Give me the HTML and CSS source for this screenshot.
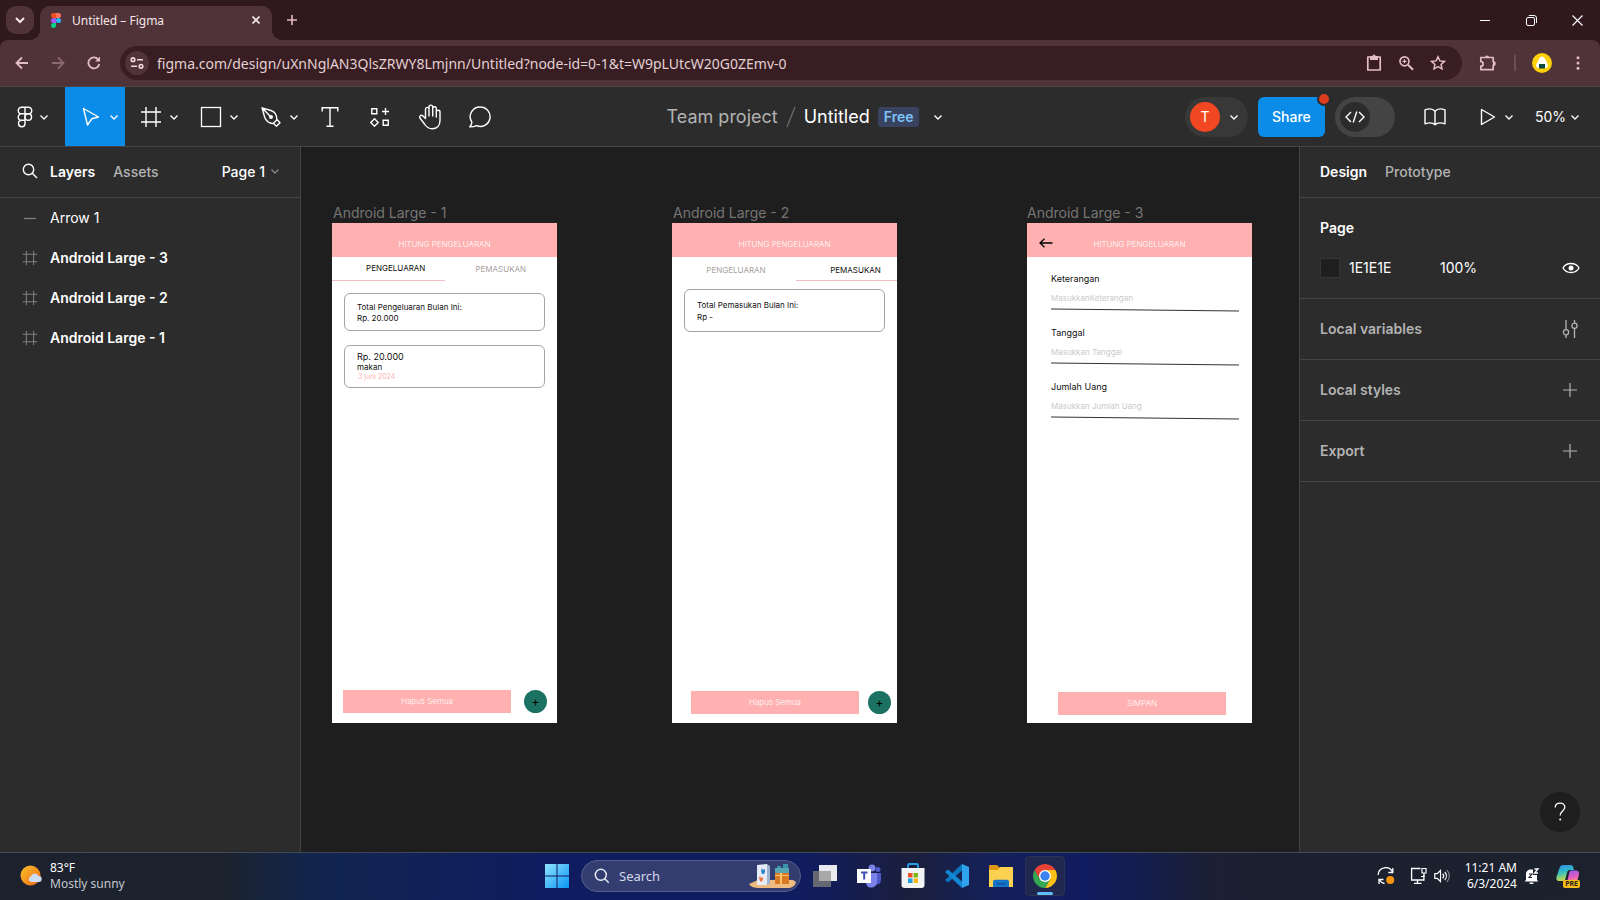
FILE: index.html
```html
<!DOCTYPE html>
<html lang="en">
<head>
<meta charset="utf-8">
<title>Untitled – Figma</title>
<link rel="stylesheet" href="styles.css">
</head>
<body>
<svg class="defs" aria-hidden="true">
  <symbol id="chev" viewBox="0 0 10 10"><path d="M1.500 3.500 5 7l3.500-3.500" fill="none" stroke="currentColor" stroke-width="1.300"/></symbol>
  <symbol id="frame" viewBox="0 0 22 22"><path d="M6 1v20M16 1v20M1 6h20M1 16h20" fill="none" stroke="currentColor" stroke-width="1.400"/></symbol>
  <symbol id="plus" viewBox="0 0 14 14"><path d="M7 0v14M0 7h14" fill="none" stroke="currentColor" stroke-width="1.200"/></symbol>
</svg>
<div class="screen">

<header class="tabstrip">
  <button class="tab-search" aria-label="Search tabs"><svg width="10" height="10" viewBox="0 0 10 10"><path d="M1 3l4 4 4-4" fill="none" stroke="currentColor" stroke-width="2"/></svg></button>
  <div class="tab">
    <svg width="10" height="15" viewBox="0 0 10 15"><path d="M2.500 0H5v5H2.500a2.500 2.500 0 010-5z" fill="#f24e1e"/><path d="M5 0h2.500a2.500 2.500 0 010 5H5z" fill="#ff7262"/><path d="M2.500 5H5v5H2.500a2.500 2.500 0 010-5z" fill="#a259ff"/><circle cx="7.500" cy="7.500" r="2.500" fill="#1abcfe"/><path d="M2.500 10H5v2.500A2.500 2.500 0 112.500 10z" fill="#0acf83"/></svg>
    <span class="tab-title">Untitled – Figma</span>
    <button class="tab-close" aria-label="Close tab"><svg width="8" height="8" viewBox="0 0 8 8"><path d="M.5.5l7 7M7.500.5l-7 7" stroke="currentColor" stroke-width="1.600"/></svg></button>
  </div>
  <button class="new-tab" aria-label="New tab"><svg width="10" height="10" viewBox="0 0 10 10"><path d="M5 0v10M0 5h10" stroke="currentColor" stroke-width="1.600"/></svg></button>
  <div class="window-controls">
    <button aria-label="Minimize"><svg width="10" height="10"><path d="M0 5.500h10" stroke="currentColor"/></svg></button>
    <button aria-label="Restore"><svg width="11" height="11" viewBox="0 0 11 11"><rect x=".5" y="2.500" width="8" height="8" rx="1.500" fill="none" stroke="currentColor"/><path d="M2.800.5H8A2.500 2.500 0 0110.500 3v5" fill="none" stroke="currentColor"/></svg></button>
    <button aria-label="Close"><svg width="11" height="11" viewBox="0 0 11 11"><path d="M.5.5l10 10M10.500.5l-10 10" stroke="currentColor" stroke-width="1.100"/></svg></button>
  </div>
</header>

<div class="browserbar">
  <button class="nav" aria-label="Back"><svg width="14" height="14" viewBox="0 0 14 14"><path d="M13 7H2M7 1.500L1.500 7 7 12.500" fill="none" stroke="currentColor" stroke-width="1.800"/></svg></button>
  <button class="nav dim" aria-label="Forward"><svg width="14" height="14" viewBox="0 0 14 14"><path d="M1 7h11M7 1.500L12.500 7 7 12.500" fill="none" stroke="currentColor" stroke-width="1.800"/></svg></button>
  <button class="nav" aria-label="Reload"><svg width="14" height="14" viewBox="0 0 14 14"><path d="M12.300 8A5.500 5.500 0 1111 3.200L12 4.300" fill="none" stroke="currentColor" stroke-width="1.800"/><path d="M13 .5v5H8z" fill="currentColor"/></svg></button>
  <div class="omnibox">
    <button class="site-info" aria-label="Site information"><svg width="14" height="12" viewBox="0 0 14 12"><g fill="none" stroke="currentColor" stroke-width="1.600"><circle cx="3" cy="2.700" r="1.800"/><path d="M7 2.700h6M1 9.300h6"/><circle cx="11" cy="9.300" r="1.800"/></g></svg></button>
    <input class="url" aria-label="Address" value="figma.com/design/uXnNglAN3QlsZRWY8Lmjnn/Untitled?node-id=0-1&amp;t=W9pLUtcW20G0ZEmv-0">
    <button aria-label="Clipboard"><svg width="16" height="18" viewBox="0 0 16 18"><path d="M1.800 3h12.400v13H1.800z" fill="none" stroke="currentColor" stroke-width="1.700" stroke-linejoin="round"/><path d="M4 2h2.500a1.500 1.500 0 013 0H12v4H4z" fill="currentColor"/></svg></button>
    <button aria-label="Zoom"><svg width="16" height="16" viewBox="0 0 16 16"><g fill="none" stroke="currentColor"><circle cx="6.500" cy="6.300" r="4.500" stroke-width="1.700"/><path d="M10 9.800l5 4.900" stroke-width="1.900"/><path d="M6.500 4.300v4M4.500 6.300h4" stroke-width="1.200"/></g></svg></button>
    <button aria-label="Bookmark"><svg width="16" height="16" viewBox="0 0 16 16"><path d="M8 1.800l1.900 4.100 4.500.5-3.300 3 .9 4.400L8 11.600l-4 2.200.9-4.400-3.300-3 4.500-.5z" fill="none" stroke="currentColor" stroke-width="1.500"/></svg></button>
  </div>
  <button class="ext" aria-label="Extensions"><svg width="18" height="18" viewBox="0 0 18 18"><path d="M1.800 3.500h12.400v4.300a1.700 1.700 0 010 3.400v4.500H1.800v-3.500a2.200 2.200 0 000-4.600z" fill="none" stroke="currentColor" stroke-width="1.700" stroke-linejoin="round"/><path d="M6 3.500a2 2 0 014 0zM14 7.300a2.200 2.200 0 010 4.400z" fill="currentColor"/></svg></button>
  <span class="bar-sep"></span>
  <button class="profile" aria-label="Profile"><svg width="20" height="20" viewBox="0 0 20 20"><circle cx="10" cy="10" r="10" fill="#fdd007"/><path d="M10 3.500c1.500 0 2.300 1 3.200 2.700l2.200 4.300c1 2.300.5 4.500-2 4.500H6.600c-2.500 0-3-2.200-2-4.500l2.200-4.300C7.700 4.500 8.500 3.500 10 3.500z" fill="#fff"/><path d="M7 11h6v4.500H7z" fill="#0c4a3e"/></svg></button>
  <button class="more" aria-label="Menu"><svg width="4" height="14" viewBox="0 0 4 14"><g fill="currentColor"><circle cx="2" cy="1.700" r="1.500"/><circle cx="2" cy="7" r="1.500"/><circle cx="2" cy="12.300" r="1.500"/></g></svg></button>
</div>

<nav class="toolbar">
  <div class="tools">
    <button class="tool first" aria-label="Main menu"><svg width="16" height="22" viewBox="0 0 16 22"><g fill="none" stroke="currentColor" stroke-width="1.400"><path d="M8 1.200H4.500a3.250 3.250 0 000 6.500H8zM8 1.200h3.500a3.250 3.250 0 010 6.500H8M8 7.700H4.500a3.250 3.250 0 000 6.500H8zM4.500 14.200a3.250 3.250 0 103.500 3.200v-3.200z"/><circle cx="11.300" cy="10.950" r="3.250"/></g></svg><svg class="chev"><use href="#chev"/></svg></button>
    <button class="tool wide active" aria-label="Move"><svg width="22" height="22" viewBox="0 0 22 22"><path d="M3.500 2.500l15 8.500-6.700 1.800-4.300 6.200z" fill="none" stroke="currentColor" stroke-width="1.400" stroke-linejoin="round"/></svg><svg class="chev"><use href="#chev"/></svg></button>
    <button class="tool wide" aria-label="Frame"><svg width="22" height="22"><use href="#frame"/></svg><svg class="chev"><use href="#chev"/></svg></button>
    <button class="tool wide" aria-label="Rectangle"><svg width="22" height="22"><rect x="1.500" y="1.500" width="19" height="19" fill="none" stroke="currentColor" stroke-width="1.300"/></svg><svg class="chev"><use href="#chev"/></svg></button>
    <button class="tool wide" aria-label="Pen"><svg width="22" height="22" viewBox="0 0 22 22"><g fill="none" stroke="currentColor" stroke-width="1.400" stroke-linejoin="round"><path d="M2 1.800l9 2.700c4 1.300 6 5 5.800 9.500l-3.600 3.600C8.700 17.200 6 15 4.700 11.200zM2 1.800l8 8.200"/><path d="M17 13.500l3 3.200-3.600 3.600-3-3"/></g><circle cx="11" cy="11" r="2" fill="currentColor"/></svg><svg class="chev"><use href="#chev"/></svg></button>
    <button class="tool" aria-label="Text"><svg width="18" height="22" viewBox="0 0 18 22"><path d="M1.200 5.500V1.700h15.600v3.800M9 1.700v18.600M5.500 20.300h7" fill="none" stroke="currentColor" stroke-width="1.400"/></svg></button>
    <button class="tool" aria-label="Resources"><svg width="20" height="20" viewBox="0 0 20 20"><path d="M1.800 1.700h5v5h-5zM13.200 13.300h5v5h-5zM15.500 1v7M12 4.500h7M4.500 11.800l3.700 3.700-3.700 3.700-3.700-3.700z" fill="none" stroke="currentColor" stroke-width="1.400"/></svg></button>
    <button class="tool" aria-label="Hand"><svg width="24" height="26" viewBox="0 0 24 26"><path d="M7.500 14.500V5.200c0-2.400 3.500-2.400 3.500 0V12 3c0-2.500 3.700-2.500 3.700 0v9V4.500c0-2.400 3.600-2.400 3.600 0V13 8c0-2.300 3.700-2.300 3.700 0v8.500c0 5-3 8.300-7.800 8.300-4 0-6-2-7.700-4.800L1.900 14c-1.200-2.200 1.600-3.800 3.100-2z" fill="none" stroke="currentColor" stroke-width="1.400" stroke-linejoin="round"/></svg></button>
    <button class="tool" aria-label="Comment"><svg width="24" height="24" viewBox="0 0 24 24"><path d="M12.500 2a9.700 9.700 0 11-4 18.600c-1.300.8-3.500 1.300-6.800 1.300 1.700-1.800 2.200-3.200 2.200-4.800A9.700 9.700 0 0112.500 2z" fill="none" stroke="currentColor" stroke-width="1.400" stroke-linejoin="round"/></svg></button>
  </div>
  <div class="doc-title">
    <a href="#team" class="team">Team project</a>
    <svg width="10" height="22"><path d="M1 21L9 1" stroke="#6b6b6b" stroke-width="1.300"/></svg>
    <span class="doc-name">Untitled</span>
    <span class="badge">Free</span>
    <button aria-label="File options"><svg class="chev"><use href="#chev"/></svg></button>
  </div>
  <div class="actions">
    <button class="user" aria-label="Account"><span class="avatar">T</span><svg class="chev"><use href="#chev"/></svg></button>
    <button class="share">Share<span class="dot"></span></button>
    <label class="devmode"><input type="checkbox" role="switch" aria-label="Dev mode"><span class="knob"><svg width="20" height="12" viewBox="0 0 20 12"><path d="M6 1L1 6l5 5M14 1l5 5-5 5M11.800.500L8.200 11.500" fill="none" stroke="currentColor" stroke-width="1.400"/></svg></span></label>
    <button class="book" aria-label="Libraries"><svg width="22" height="18" viewBox="0 0 22 18"><path d="M11 3.200C9 .8 4.500.6 1 1.800v14C4.500 14.600 9 14.800 11 16.700c2-1.900 6.500-2.100 10-.9v-14C17.500.6 13 .8 11 3.200zV16.700" fill="none" stroke="currentColor" stroke-width="1.400" stroke-linejoin="round"/></svg></button>
    <button class="play" aria-label="Present"><svg width="16" height="18" viewBox="0 0 16 18"><path d="M1.500 1.500v15L14.500 9z" fill="none" stroke="currentColor" stroke-width="1.400" stroke-linejoin="round"/></svg><svg class="chev"><use href="#chev"/></svg></button>
    <button class="zoom">50%<svg class="chev"><use href="#chev"/></svg></button>
  </div>
</nav>

<main class="workspace">
  <aside class="panel left">
    <div class="panel-head">
      <button class="find" aria-label="Find"><svg width="16" height="16" viewBox="0 0 16 16"><circle cx="6.500" cy="6.500" r="5.200" fill="none" stroke="currentColor" stroke-width="1.400"/><path d="M10 10l5 5" stroke="currentColor" stroke-width="1.400"/></svg></button>
      <button class="on">Layers</button>
      <button class="off assets">Assets</button>
      <button class="page">Page 1<svg class="chev"><use href="#chev"/></svg></button>
    </div>
    <ul class="layers">
      <li class="plain"><svg width="16" height="16"><path d="M2 8.500h12" stroke="currentColor" stroke-width="1.300"/></svg>Arrow 1</li>
      <li><svg width="16" height="16"><use href="#frame"/></svg>Android Large - 3</li>
      <li><svg width="16" height="16"><use href="#frame"/></svg>Android Large - 2</li>
      <li><svg width="16" height="16"><use href="#frame"/></svg>Android Large - 1</li>
    </ul>
  </aside>

  <section class="canvas" aria-label="Canvas">
    <article class="artboard one">
      <h2>Android Large - 1</h2>
      <div class="phone">
        <div class="appbar">HITUNG PENGELUARAN</div>
        <div class="apptabs"><button class="chosen">PENGELUARAN</button><button>PEMASUKAN</button></div>
        <div class="card total"><p>Total Pengeluaran Bulan Ini:</p><p>Rp. 20.000</p></div>
        <div class="card entry"><p class="amount">Rp. 20.000</p><p class="what">makan</p><p class="date">3 juni 2024</p></div>
        <div class="foot"><button class="wipe">Hapus Semua</button><button class="add">+</button></div>
      </div>
    </article>
    <article class="artboard two">
      <h2>Android Large - 2</h2>
      <div class="phone">
        <div class="appbar">HITUNG PENGELUARAN</div>
        <div class="apptabs"><button>PENGELUARAN</button><button class="chosen">PEMASUKAN</button></div>
        <div class="card total"><p>Total Pemasukan Bulan Ini:</p><p>Rp -</p></div>
        <div class="foot"><button class="wipe">Hapus Semua</button><button class="add">+</button></div>
      </div>
    </article>
    <article class="artboard three">
      <h2>Android Large - 3</h2>
      <div class="phone">
        <div class="appbar"><button class="back" aria-label="Back"><svg width="14" height="10" viewBox="0 0 14 10"><path d="M13.500 5H1M5.500.700L1 5l4.500 4.300" fill="none" stroke="#000" stroke-width="1.300"/></svg></button>HITUNG PENGELUARAN</div>
        <form class="fields">
          <label>Keterangan<input placeholder="MasukkanKeterangan"><svg class="rule" viewBox="0 0 188 4" preserveAspectRatio="none"><path d="M0 1l188 2"/></svg></label>
          <label>Tanggal<input placeholder="Masukkan Tanggal"><svg class="rule" viewBox="0 0 188 4" preserveAspectRatio="none"><path d="M0 1l188 2"/></svg></label>
          <label>Jumlah Uang<input placeholder="Masukkan Jumlah Uang"><svg class="rule" viewBox="0 0 188 4" preserveAspectRatio="none"><path d="M0 1l188 2"/></svg></label>
        </form>
        <div class="foot"><button class="wipe">SIMPAN</button></div>
      </div>
    </article>
  </section>

  <aside class="panel right">
    <div class="panel-head"><button class="on">Design</button><button class="off">Prototype</button></div>
    <section class="page-props">
      <h3>Page</h3>
      <div class="fill"><span class="swatch"></span><input class="hex" aria-label="Page colour" value="1E1E1E"><input class="opacity" aria-label="Opacity" value="100%"><button aria-label="Toggle visibility"><svg width="18" height="12" viewBox="0 0 18 12"><path d="M1 6c3.200-6 12.800-6 16 0-3.200 6-12.800 6-16 0z" fill="none" stroke="currentColor" stroke-width="1.300"/><circle cx="9" cy="6" r="2.500" fill="currentColor"/></svg></button></div>
    </section>
    <section class="prop"><h3>Local variables</h3><button aria-label="Open variables"><svg width="16" height="18" viewBox="0 0 16 18"><g fill="none" stroke="currentColor" stroke-width="1.300"><path d="M4 0v9.500M4 15v3M12.500 0v3M12.500 8.500V18"/><circle cx="4" cy="12.200" r="2.600"/><circle cx="12.500" cy="5.800" r="2.600"/></g></svg></button></section>
    <section class="prop"><h3>Local styles</h3><button aria-label="Add style"><svg width="14" height="14"><use href="#plus"/></svg></button></section>
    <section class="prop"><h3>Export</h3><button aria-label="Add export"><svg width="14" height="14"><use href="#plus"/></svg></button></section>
    <button class="help" aria-label="Help"><svg width="12" height="20" viewBox="0 0 12 20"><path d="M1.200 5.500C1.200 2.800 3 1.200 6 1.200s4.800 1.600 4.800 4c0 3.800-4.600 3.800-4.600 8.300" fill="none" stroke="currentColor" stroke-width="1.300"/><circle cx="6.200" cy="17.500" r="1" fill="currentColor"/></svg></button>
  </aside>
</main>

<footer class="taskbar">
  <button class="weather">
    <svg width="23" height="22" viewBox="0 0 23 22"><defs><linearGradient id="sun" x2="1" y2="1"><stop stop-color="#fbbf2c"/><stop offset="1" stop-color="#ee6b14"/></linearGradient></defs><circle cx="10.500" cy="10.500" r="10" fill="url(#sun)"/><path d="M11 17a3 3 0 010-5.800 4 4 0 017.400-.2 3 3 0 01.6 6z" fill="#cfdcf5"/></svg>
    <span class="two-lines"><span>83°F</span><span class="soft">Mostly sunny</span></span>
  </button>
  <div class="apps">
    <button aria-label="Start"><svg width="24" height="24" viewBox="0 0 24 24"><defs><linearGradient id="win" x2="1" y2="1"><stop stop-color="#8fe4ff"/><stop offset="1" stop-color="#0a94f5"/></linearGradient></defs><path d="M0 0h11.500v11.500H0zM12.500 0H24v11.500H12.500zM0 12.500h11.500V24H0zM12.500 12.500H24V24H12.500z" fill="url(#win)"/></svg></button>
    <label class="search">
      <svg width="16" height="16" viewBox="0 0 16 16"><circle cx="6.800" cy="6.800" r="5.500" fill="none" stroke="#e6e9f4" stroke-width="1.500"/><path d="M10.800 10.800l4 4" stroke="#e6e9f4" stroke-width="1.500"/></svg>
      <input placeholder="Search" aria-label="Search">
      <svg width="47" height="26" viewBox="0 0 47 26"><path d="M0 21l9-4h35l3 2c-1 4-4 6-9 6H11c-6 0-9-1-11-4z" fill="#eebc80"/><path d="M8 2l10-1v21H8z" fill="#e6ecf7"/><path d="M18 1l3 2v18l-3 1z" fill="#9fb2cf"/><path d="M12 8l1-3 1 2 2-1v3l-1 2h-2z" fill="#2a86c9"/><path d="M10 15l1-2 1 2 2-1v3l-2 2-1-1z" fill="#ee7645"/><path d="M28 3h4v7h-4zM34 1h5v9h-5z" fill="#3b93a9"/><path d="M26 5h14v5H26z" fill="#59a5b3"/><path d="M26 10h14v11H26z" fill="#d87924"/><path d="M31 10h2v11h-2zM26 12h14v1H26z" fill="#ffc071"/></svg>
    </label>
    <button aria-label="Task view"><svg width="24" height="24" viewBox="0 0 24 24"><path d="M6 1h18v16H6z" fill="#e8eaf0"/><path d="M0 7h18v16H0z" fill="#747577" fill-opacity=".85"/><path d="M6 7h12v10H6z" fill="#a9a9aa"/></svg></button>
    <button aria-label="Teams"><svg width="24" height="24" viewBox="0 0 24 24"><circle cx="21" cy="5.500" r="2.500" fill="#5059c9"/><circle cx="15" cy="4" r="3.500" fill="#7b83eb"/><path d="M17 9h7v7c0 3-2 4.500-5 4.500z" fill="#5059c9"/><path d="M9 9h11v8c0 4-2 6.500-6 6.500S9 21 9 17z" fill="#7b83eb"/><path d="M0 5h14v14H0z" fill="#fff"/><path d="M4 8.500h6.500M7.200 8.500v7" stroke="#454db8" stroke-width="2"/></svg></button>
    <button aria-label="Store"><svg width="24" height="26" viewBox="0 0 24 26"><path d="M7 6V2.500C7 1.700 7.500 1 8.500 1h7c1 0 1.500.7 1.500 1.500V6" fill="none" stroke="#27a0e8" stroke-width="1.800"/><path d="M.5 5h23v17c0 2-1 3-3 3h-17c-2 0-3-1-3-3z" fill="#f1f3f5"/><path d="M7 10h4.500v4.500H7z" fill="#f0502a"/><path d="M12.500 10H17v4.500h-4.500z" fill="#7cba14"/><path d="M7 15.500h4.500V20H7z" fill="#1ba0e2"/><path d="M12.500 15.500H17V20h-4.500z" fill="#fdb813"/></svg></button>
    <button aria-label="Visual Studio Code"><svg width="24" height="24" viewBox="0 0 24 24"><path d="M17 0v6.500L3 18.500l-3-2.600z" fill="#0b76c0"/><path d="M17 24v-6.500L3 5.500 0 8.100z" fill="#1389d6"/><path d="M17 0l7 3v18l-7 3z" fill="#2fa3ee"/></svg></button>
    <button aria-label="File Explorer"><svg width="24" height="24" viewBox="0 0 24 24"><path d="M0 2.500C0 1.500.5 1 1.500 1H8l2.500 2.500V8H0z" fill="#dc960f"/><path d="M0 6h8.500L11 3h13v20H0z" fill="#fcd050"/><path d="M4 23v-5c0-1.500.8-2.300 2.300-2.300h11.400c1.500 0 2.300.8 2.300 2.300v5z" fill="#1474c9"/><path d="M7.500 19h9v1.500h-9z" fill="#0f569c"/></svg></button>
    <button class="running" aria-label="Chrome"><svg width="24" height="24" viewBox="0 0 24 24"><path d="M22.390 6A12 12 0 0112 24l5.200-9L12 6z" fill="#fbc116"/><path d="M1.610 6A12 12 0 0012 24l5.200-9H6.800z" fill="#34a853"/><path d="M1.610 6A12 12 0 0122.390 6H12L6.800 15z" fill="#ea4335"/><circle cx="12" cy="12" r="6" fill="#fff"/><circle cx="12" cy="12" r="4.700" fill="#3b82f0"/></svg></button>
  </div>
  <div class="tray">
    <button aria-label="Updates"><svg width="18" height="18" viewBox="0 0 18 18"><path d="M1.200 8A7.500 7.500 0 0115.500 5M15.800 1v4.500h-4.500M2 17v-4.500h4.500M2.500 13a7.500 7.500 0 005 3.500" fill="none" stroke="currentColor" stroke-width="1.300"/><circle cx="13.200" cy="13" r="4" fill="#f7940d"/></svg></button>
    <button class="system" aria-label="Network and volume">
      <svg width="17" height="18" viewBox="0 0 17 18"><path d="M10.500 1.500H1.600v11.500h12.300V8M7.500 13v3M4 16.300h7.500" fill="none" stroke="currentColor" stroke-width="1.300"/><path d="M12 1.500h4v4.500h-4zM14 6v3.500h-3" fill="none" stroke="currentColor" stroke-width="1.200"/></svg>
      <svg width="16" height="14" viewBox="0 0 16 14"><g fill="none" stroke="currentColor" stroke-width="1.200"><path d="M.8 4.700h2.400L6.500 1.500v11L3.200 9.300H.8zM8.700 4.700a3.500 3.500 0 010 4.600M10.800 3a6 6 0 010 8"/><path d="M13 1.200a8.500 8.500 0 010 11.600" opacity=".45"/></g></svg>
    </button>
    <button class="clock"><span>11:21 AM</span><span>6/3/2024</span></button>
    <button aria-label="Notifications"><svg width="16" height="16" viewBox="0 0 16 16"><path d="M2 12V6.500C2 3 4 1.500 7 1.500h2V7h4v5l1.500 1.500H.5zM5.500 14.500h4a2 2 0 01-4 0z" fill="currentColor"/><path d="M10.500 1H14l-3.500 4H14" fill="none" stroke="currentColor" stroke-width="1.300"/><path d="M5 6h3l-3 3.500h3" fill="none" stroke="#1c212d" stroke-width="1.100"/></svg></button>
    <button class="copilot" aria-label="Copilot"><svg width="24" height="22" viewBox="0 0 24 22"><defs><linearGradient id="cpa" x2=".2" y2="1"><stop stop-color="#2c8cf0"/><stop offset=".5" stop-color="#32bfc0"/><stop offset="1" stop-color="#c9d94a"/></linearGradient><linearGradient id="cpb" x2=".2" y2="1"><stop stop-color="#8d60ef"/><stop offset=".6" stop-color="#e75cc1"/><stop offset="1" stop-color="#fa9a67"/></linearGradient></defs><path d="M7 0h7.500c1.800 0 2.500 1 3 3l.5 2h-4c-2 0-2.500 1-3 3l-1.500 5.500C9 15.500 8 16 6.500 16H3c-2.500 0-3-2-2.500-4L3.500 3C4.200 1 5 0 7 0z" fill="url(#cpa)"/><path d="M15.500 5.500H20c2.500 0 3.500 1.700 3 4L21.500 15c-.5 2-1.500 3-3.500 3h-7l2-9.500c.4-2 .9-3 2.500-3z" fill="url(#cpb)"/></svg><span class="pre">PRE</span></button>
  </div>
</footer>
</div>
</body>
</html>
```

FILE: styles.css
```css
* { box-sizing: border-box; }

body {
  margin: 0;
  background: #1e1e1e;
  color: #fff;
  font-family: Inter, "Liberation Sans", sans-serif;
  font-size: 14px;
}

button, input {
  font: inherit;
  color: inherit;
  background: none;
  border: 0;
  padding: 0;
  margin: 0;
  min-width: 0;
  outline: 0;
}

button {
  display: inline-flex;
  align-items: center;
  justify-content: center;
  flex: none;
}

svg { display: block; flex: none; }
h2, h3, p, ul { margin: 0; padding: 0; font-size: inherit; }
ul { list-style: none; }
.defs { position: absolute; width: 0; height: 0; }
.chev { width: 10px; height: 10px; }

.screen {
  display: flex;
  flex-direction: column;
  height: 100vh;
  overflow: hidden;
  background: #2f191e;
}

/* Browser tabs */
.tabstrip {
  display: flex;
  align-items: center;
  height: 40px;
  padding-left: 6px;
  color: #f6e6e8;
  font-family: "Noto Sans", sans-serif;
  font-size: 12px;
}
.tab-search { width: 28px; height: 28px; border-radius: 10px; background: #4f3338; }
.tab {
  position: relative;
  display: flex;
  align-items: center;
  align-self: flex-end;
  width: 232px;
  height: 34px;
  margin-left: 6px;
  padding: 0 12px 6px 11px;
  border-radius: 10px 10px 0 0;
  background: #4f3338;
}
.tab::before, .tab::after {
  content: "";
  position: absolute;
  bottom: 0;
  width: 10px;
  height: 10px;
}
.tab::before { right: 100%; background: radial-gradient(circle at 0 0, #2f191e 10px, #4f3338 10px); }
.tab::after { left: 100%; background: radial-gradient(circle at 100% 0, #2f191e 10px, #4f3338 10px); }
.tab-title { flex: 1; margin-left: 11px; }
.new-tab { width: 20px; height: 28px; margin-left: 10px; color: #e4bcc4; }
.window-controls { display: flex; margin-left: auto; }
.window-controls button { width: 46px; height: 40px; color: #fff; }

/* Browser address bar */
.browserbar {
  display: flex;
  align-items: center;
  height: 46px;
  padding: 0 16px 0 4px;
  border-radius: 8px 8px 0 0;
  background: #4f3338;
  color: #e4bcc4;
}
.nav { width: 36px; height: 36px; }
.dim { color: #8d6970; }
.omnibox {
  display: flex;
  flex: 1;
  align-items: center;
  height: 34px;
  margin-left: 8px;
  padding: 0 8px 0 5px;
  border-radius: 17px;
  background: #381e22;
}
.omnibox button { width: 32px; height: 32px; }
.omnibox .site-info { width: 24px; height: 24px; border-radius: 12px; background: #4f3338; color: #f0d8dc; }
.url {
  flex: 1;
  margin-left: 8px;
  color: #e3d0d3;
  font-family: "Noto Sans", sans-serif;
}
.ext { width: 34px; height: 34px; margin-left: 9px; }
.bar-sep { width: 2px; height: 16px; margin: 0 16px 0 9px; background: #704d54; }
.more { width: 12px; height: 20px; margin-left: 20px; }

/* Editor toolbar */
.toolbar {
  display: grid;
  grid-template-columns: 1fr auto 1fr;
  align-items: center;
  height: 61px;
  border-top: 1px solid #4a4648;
  border-bottom: 1px solid #444;
  background: #2c2c2c;
}
.tools { display: flex; }
.tool { width: 50px; height: 59px; }
.tool.first { width: 65px; gap: 6px; padding-left: 1px; }
.tool.wide { width: 60px; gap: 7px; padding-left: 9px; }
.active { background: #0c8ce9; }
.doc-title {
  display: flex;
  align-items: center;
  gap: 8px;
  padding-left: 10px;
  font-size: 18px;
}
.team { color: #b3b3b3; text-decoration: none; }
.badge {
  padding: 0 6px;
  border-radius: 3px;
  background: #394360;
  color: #7cc4f8;
  font-size: 14px;
  font-weight: 600;
  line-height: 20px;
}
.doc-title button { margin-left: 6px; }
.actions { display: flex; justify-content: flex-end; align-items: center; padding-right: 20px; }
.user { gap: 9px; width: 63px; height: 40px; padding-right: 4px; border-radius: 20px; background: #383838; }
.avatar { width: 30px; height: 30px; border-radius: 15px; background: #f24822; line-height: 30px; }
.share {
  position: relative;
  width: 67px;
  height: 40px;
  margin: 0 10px;
  border-radius: 6px;
  background: #0c8ce9;
  font-weight: 500;
}
.dot {
  position: absolute;
  top: -5px;
  right: -6px;
  width: 14px;
  height: 14px;
  border: 2px solid #2c2c2c;
  border-radius: 7px;
  background: #dc3e1d;
}
.devmode { position: relative; display: flex; align-items: center; width: 60px; height: 40px; padding-left: 5px; border-radius: 20px; background: #444; }
.devmode input { position: absolute; inset: 0; appearance: none; }
.knob { display: flex; align-items: center; justify-content: center; width: 30px; height: 30px; border-radius: 15px; background: #2c2c2c; }
.book { margin: 0 34px 0 29px; }
.play { gap: 8px; margin-right: 21px; }
.zoom { gap: 4px; }

/* Editor body */
.workspace {
  display: grid;
  grid-template-columns: 301px 1fr 301px;
  flex: 1;
  min-height: 0;
}
.panel { display: flex; flex-direction: column; background: #2c2c2c; }
.left { border-right: 1px solid #444; }
.right { position: relative; border-left: 1px solid #444; }
.panel-head { display: flex; align-items: center; height: 51px; padding-bottom: 2px; border-bottom: 1px solid #444; }
.on { font-weight: 600; }
.off { color: #b3b3b3; font-weight: 500; }
.left .panel-head { padding: 0 20px 2px 22px; }
.find { margin-right: 12px; }
.assets { margin-left: 18px; }
.page { gap: 5px; margin-left: auto; font-weight: 500; }
.page .chev { color: #888; }
.layers li { display: flex; align-items: center; gap: 12px; height: 40px; padding: 0 0 1px 22px; font-weight: 600; }
.layers .plain { font-weight: 400; }
.layers svg { color: #808080; }
.right .panel-head { gap: 18px; padding-left: 20px; }
.page-props { display: flex; flex-direction: column; height: 101px; padding: 10px 20px 0; border-bottom: 1px solid #444; }
.page-props h3, .fill { height: 40px; line-height: 40px; font-weight: 600; }
.fill { display: flex; align-items: center; font-weight: 400; }
.swatch { width: 20px; height: 20px; border: 1px solid #353535; background: #1e1e1e; }
.hex { width: 91px; margin-left: 9px; }
.opacity { flex: 1; }
.prop { display: flex; align-items: center; justify-content: space-between; height: 61px; padding: 0 20px 1px; border-bottom: 1px solid #444; color: #b3b3b3; }
.prop h3 { font-weight: 600; }
.prop button { width: 20px; height: 20px; }
.help { position: absolute; right: 20px; bottom: 20px; width: 40px; height: 40px; border-radius: 20px; background: #1e1e1e; }

/* Canvas and its artboards */
.canvas { position: relative; overflow: hidden; background: #1e1e1e; }
.artboard { position: absolute; top: 56px; width: 225px; }
.one { left: 31px; }
.two { left: 371px; }
.three { left: 726px; }
.artboard h2 { height: 20px; padding: 0 0 1px 1px; color: #757575; font-weight: 400; line-height: 19px; }
.three h2 { padding-left: 0; }
.phone {
  display: flex;
  flex-direction: column;
  height: 500px;
  background: #fff;
  color: #111;
  font-size: 8px;
  line-height: 11px;
}
.appbar { position: relative; height: 34px; padding-top: 16px; background: #ffb0b0; color: #fff; font-weight: 300; text-align: center; }
.back { position: absolute; left: 12px; top: 15px; }
.apptabs { display: grid; grid-template-columns: 1fr 1fr; height: 24px; }
.apptabs button { color: #a99fa0; }
.apptabs .chosen { border-bottom: 1px solid #f3bfc2; color: #111; }
.one .apptabs button:first-child { padding-left: 15px; }
.two .apptabs { grid-template-columns: 124px 101px; }
.two .apptabs button { padding: 3px 0 0 4px; }
.two .apptabs .chosen { padding-left: 18px; }
.card { margin: 0 12px; padding: 0 12px; border: 1px solid #a4a4a4; border-radius: 6px; }
.one .total { height: 38px; margin-top: 12px; padding-top: 8px; }
.entry { height: 43px; margin-top: 14px; padding-top: 6px; line-height: 10px; }
.amount { font-size: 9px; }
.date { padding-left: 1px; color: #ffb0b0; font-size: 7px; }
.two .total { height: 43px; margin-top: 8px; padding-top: 9px; line-height: 12px; }
.foot { display: flex; gap: 13px; margin-top: auto; padding: 0 11px 10px; }
.wipe { width: 168px; height: 23px; background: #ffb0b0; color: #fff; font-weight: 300; }
.add { width: 23px; height: 23px; border-radius: 12px; background: #1b7262; color: #000; font-size: 12px; }
.two .foot { gap: 9px; padding: 0 6px 9px 19px; }
.three .foot { padding: 0 0 8px 31px; }
.fields { display: grid; gap: 14px; padding: 16px 13px 0 24px; }
.fields label { display: grid; height: 40px; font-size: 9px; line-height: 12px; }
.fields input { height: 14px; margin-top: 5px; font-size: 8px; }
.fields input::placeholder { color: #cacaca; opacity: 1; }
.rule { width: 100%; height: 4px; margin-top: 3px; }
.rule path { fill: none; stroke: #333; stroke-width: 1; }

/* Desktop taskbar */
.taskbar {
  display: grid;
  grid-template-columns: 1fr auto 1fr;
  align-items: center;
  height: 48px;
  padding-bottom: 1px;
  border-top: 1px solid #41485a;
  background: linear-gradient(90deg, #1c212d 0, #1c232f 14%, #11254f 20%, #101c60 34%, #101c60 50%, #1b1f3c 57%, #14205a 62%, #101c60 68%, #1b2032 76%, #1c212d 100%);
  font-family: "Noto Sans", sans-serif;
  font-size: 12px;
}
.weather { justify-self: start; gap: 7px; margin-left: 20px; text-align: left; }
.two-lines, .clock { display: flex; flex-direction: column; line-height: 16px; }
.soft { color: #c3c7cf; }
.apps { display: flex; align-items: center; padding-left: 2px; }
.apps button { width: 40px; height: 40px; margin: 0 2px; }
.search {
  display: flex;
  align-items: center;
  width: 220px;
  height: 32px;
  margin: 0 2px;
  padding: 0 4px 0 12px;
  border: 1px solid #535e8a;
  border-radius: 16px;
  background: #333d70;
  font-size: 13px;
}
.search input { flex: 1; margin-left: 9px; }
.search input::placeholder { color: #d4d8e8; opacity: 1; }
.apps .running { position: relative; border: 1px solid #2b3357; border-radius: 4px; background: #20284f; }
.running::after { content: ""; position: absolute; bottom: 0; width: 16px; height: 3px; border-radius: 2px; background: #60bdf5; }
.tray { display: flex; justify-content: flex-end; align-items: center; padding-right: 20px; }
.system { gap: 7px; margin: 0 15px; }
.clock { align-items: flex-end; margin-right: 7px; }
.copilot { position: relative; margin-left: 16px; }
.pre { position: absolute; right: 0; bottom: -1px; padding: 0 2px; border-radius: 2px; background: #f7bb15; color: #222; font-size: 7px; font-weight: 700; line-height: 8px; }
```
